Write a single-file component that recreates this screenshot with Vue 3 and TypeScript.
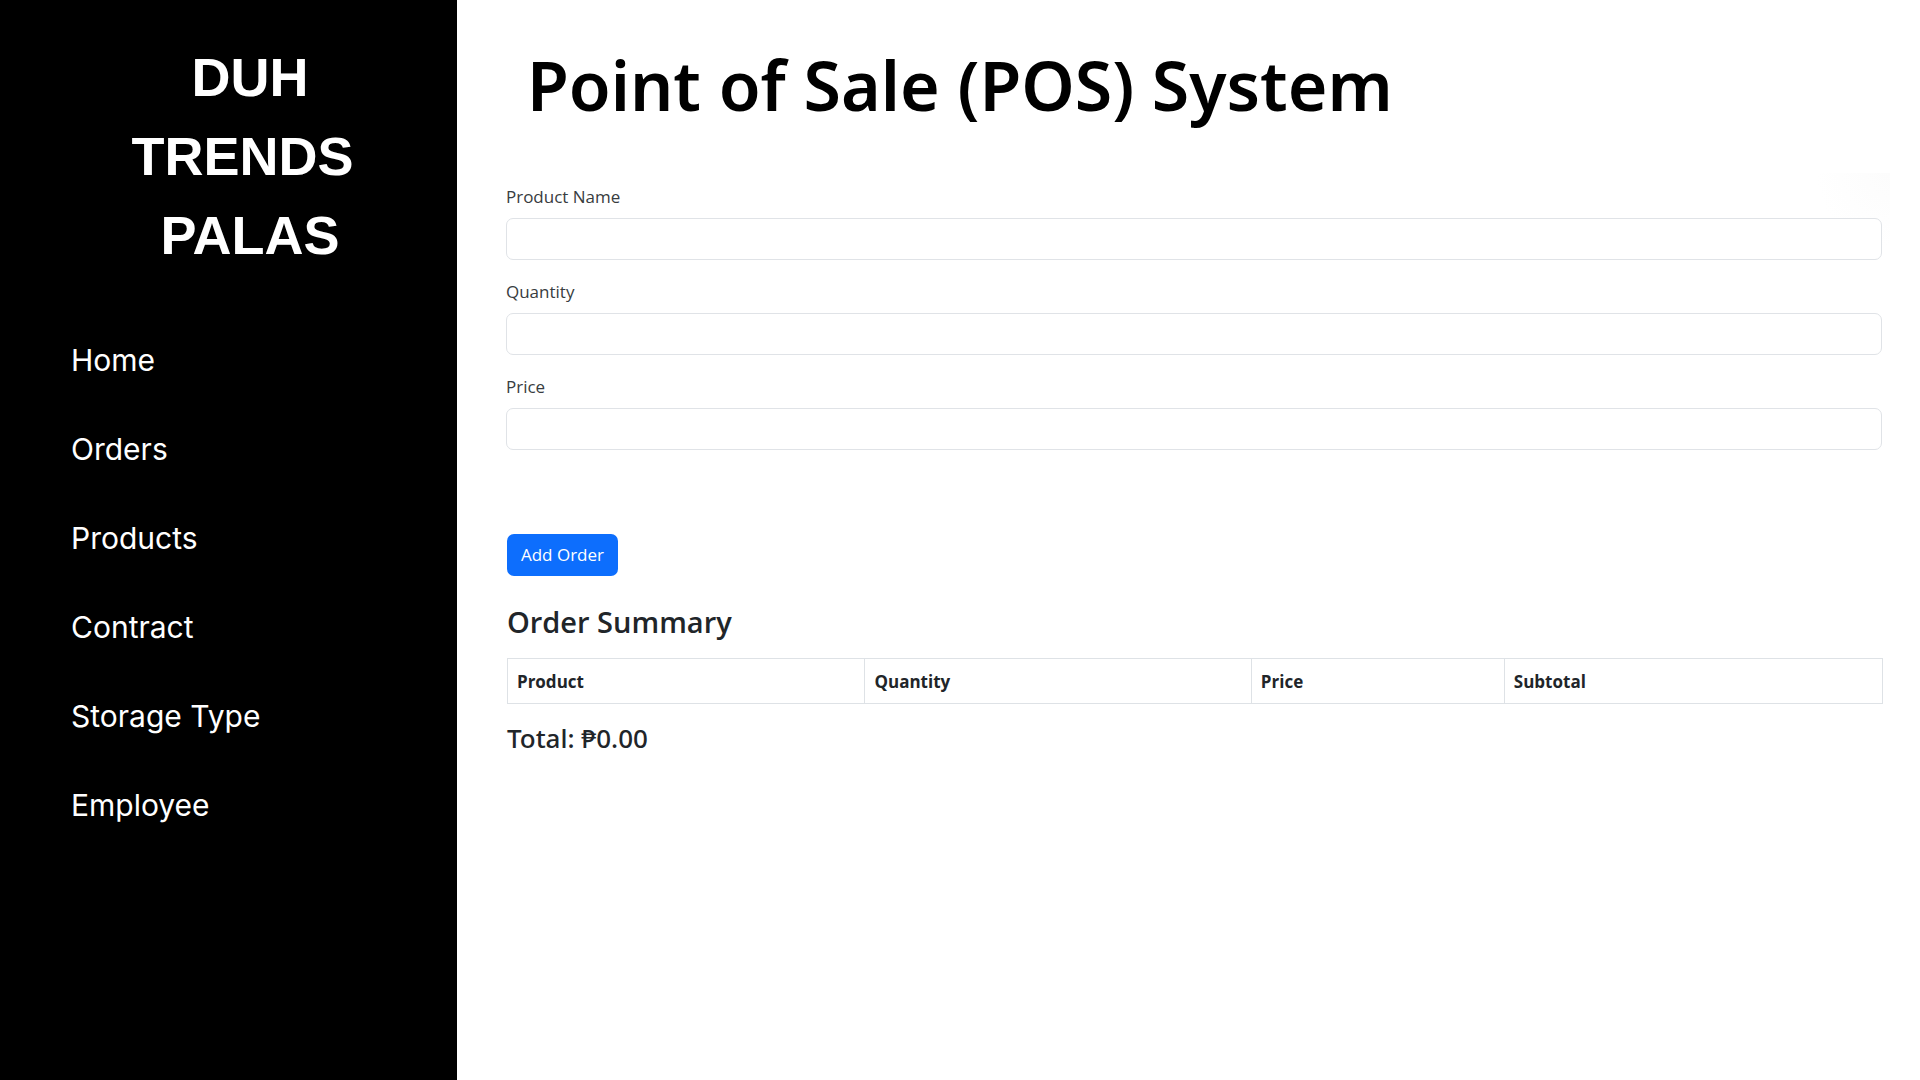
<script setup lang="ts">
import { computed, ref } from 'vue'

interface OrderLine {
  product: string
  quantity: number
  price: number
}

const brand: string[] = ['DUH', 'TRENDS ', 'PALAS']
const links: string[] = ['Home', 'Orders', 'Products', 'Contract', 'Storage Type', 'Employee']

const productName = ref('')
const quantity = ref('')
const price = ref('')
const orders = ref<OrderLine[]>([])

const total = computed(() =>
  orders.value.reduce((sum, line) => sum + line.quantity * line.price, 0).toFixed(2),
)

function addOrder(): void {
  const line: OrderLine = {
    product: productName.value.trim(),
    quantity: Number(quantity.value),
    price: Number(price.value),
  }
  if (!line.product || !(line.quantity > 0) || !(line.price > 0)) return
  orders.value.push(line)
  productName.value = ''
  quantity.value = ''
  price.value = ''
}
</script>

<template>
  <div class="page">
    <aside class="sidebar">
      <div class="brand">
        <span v-for="word in brand" :key="word" class="brand-word">{{ word }}</span>
      </div>
      <nav class="nav">
        <a v-for="link in links" :key="link" href="#" class="nav-link">{{ link }}</a>
      </nav>
    </aside>

    <main class="content">
      <h1 class="title">Point of Sale (POS) System</h1>

      <form class="panel" @submit.prevent="addOrder">
        <div class="field">
          <label for="product-name">Product Name</label>
          <input id="product-name" v-model="productName" type="text" />
        </div>
        <div class="field">
          <label for="quantity">Quantity</label>
          <input id="quantity" v-model="quantity" type="text" inputmode="numeric" />
        </div>
        <div class="field">
          <label for="price">Price</label>
          <input id="price" v-model="price" type="text" inputmode="decimal" />
        </div>
        <button type="submit" class="add">Add Order</button>
      </form>

      <section class="summary">
        <h2>Order Summary</h2>
        <table>
          <thead>
            <tr>
              <th scope="col" class="col-product">Product</th>
              <th scope="col" class="col-quantity">Quantity</th>
              <th scope="col" class="col-price">Price</th>
              <th scope="col">Subtotal</th>
            </tr>
          </thead>
          <tbody>
            <tr v-for="(line, index) in orders" :key="index">
              <td>{{ line.product }}</td>
              <td>{{ line.quantity }}</td>
              <td>₱{{ line.price.toFixed(2) }}</td>
              <td>₱{{ (line.quantity * line.price).toFixed(2) }}</td>
            </tr>
          </tbody>
        </table>
        <h3>Total: ₱{{ total }}</h3>
      </section>
    </main>
  </div>
</template>

<style>
body {
  margin: 0;
  background: #fff;
}
</style>

<style scoped>
.page {
  display: flex;
  min-height: 100vh;
  font-family: "Open Sans", "Noto Sans", sans-serif;
  font-size: 17px;
  line-height: 26px;
  color: #212529;
}

.sidebar {
  box-sizing: border-box;
  flex: none;
  width: 23.8%;
  padding-top: 38px;
  background: #000;
  color: #fff;
}

.brand {
  display: flex;
  flex-direction: column;
  align-items: center;
  padding-left: 43px;
  font-family: "Liberation Sans", Arial, sans-serif;
  font-size: 54px;
  font-weight: 700;
  line-height: 79px;
}

.brand-word {
  white-space: pre;
}

.nav {
  display: flex;
  flex-direction: column;
  align-items: flex-start;
  gap: 49px;
  margin-top: 65px;
  padding-left: 71px;
  font-family: Inter, "Liberation Sans", sans-serif;
}

.nav-link {
  color: inherit;
  font-size: 30px;
  line-height: 40px;
  text-decoration: none;
}

.content {
  flex: 1;
  min-width: 0;
  padding: 0 30px 40px 49px;
}

.title {
  margin: 0;
  padding: 45px 0 0 21px;
  color: #000;
  font-family: "Noto Sans", "Open Sans", sans-serif;
  font-size: 68px;
  font-weight: 600;
  line-height: 80px;
}

.panel {
  margin-top: 48px;
  padding: 11px 8px 0 0;
  background: radial-gradient(circle at top right, #fcfcfc, #fff 74px);
}

.field {
  display: flex;
  flex-direction: column;
  gap: 8px;
  margin-bottom: 19px;
}

.field label {
  color: #383c40;
}

.field input {
  box-sizing: border-box;
  width: 100%;
  height: 42px;
  padding: 6px 13px;
  border: 1px solid #e0e3e7;
  border-radius: 7px;
  background: #fff;
  color: inherit;
  font: inherit;
}

.add {
  display: block;
  height: 42px;
  margin: 84px 0 0 1px;
  padding: 0 14px;
  border: 0;
  border-radius: 7px;
  background: #0d6efd;
  color: #fff;
  font: inherit;
}

.summary {
  padding: 0 7px 0 1px;
}

.summary h2 {
  margin: 26px 0 16px;
  font-size: 29px;
  font-weight: 600;
  line-height: 40px;
}

.summary table {
  width: 100%;
  table-layout: fixed;
  border-collapse: collapse;
}

.summary th,
.summary td {
  box-sizing: border-box;
  padding: 10px 9px 8px;
  border: 1px solid #dee2e6;
  text-align: left;
}

.summary th {
  font-weight: 700;
}

.col-product {
  width: 26%;
}

.col-quantity {
  width: 28.1%;
}

.col-price {
  width: 18.4%;
}

.summary h3 {
  margin: 18px 0 0;
  font-family: "Noto Sans", "Open Sans", sans-serif;
  font-size: 26px;
  font-weight: 500;
  line-height: 32px;
}
</style>
